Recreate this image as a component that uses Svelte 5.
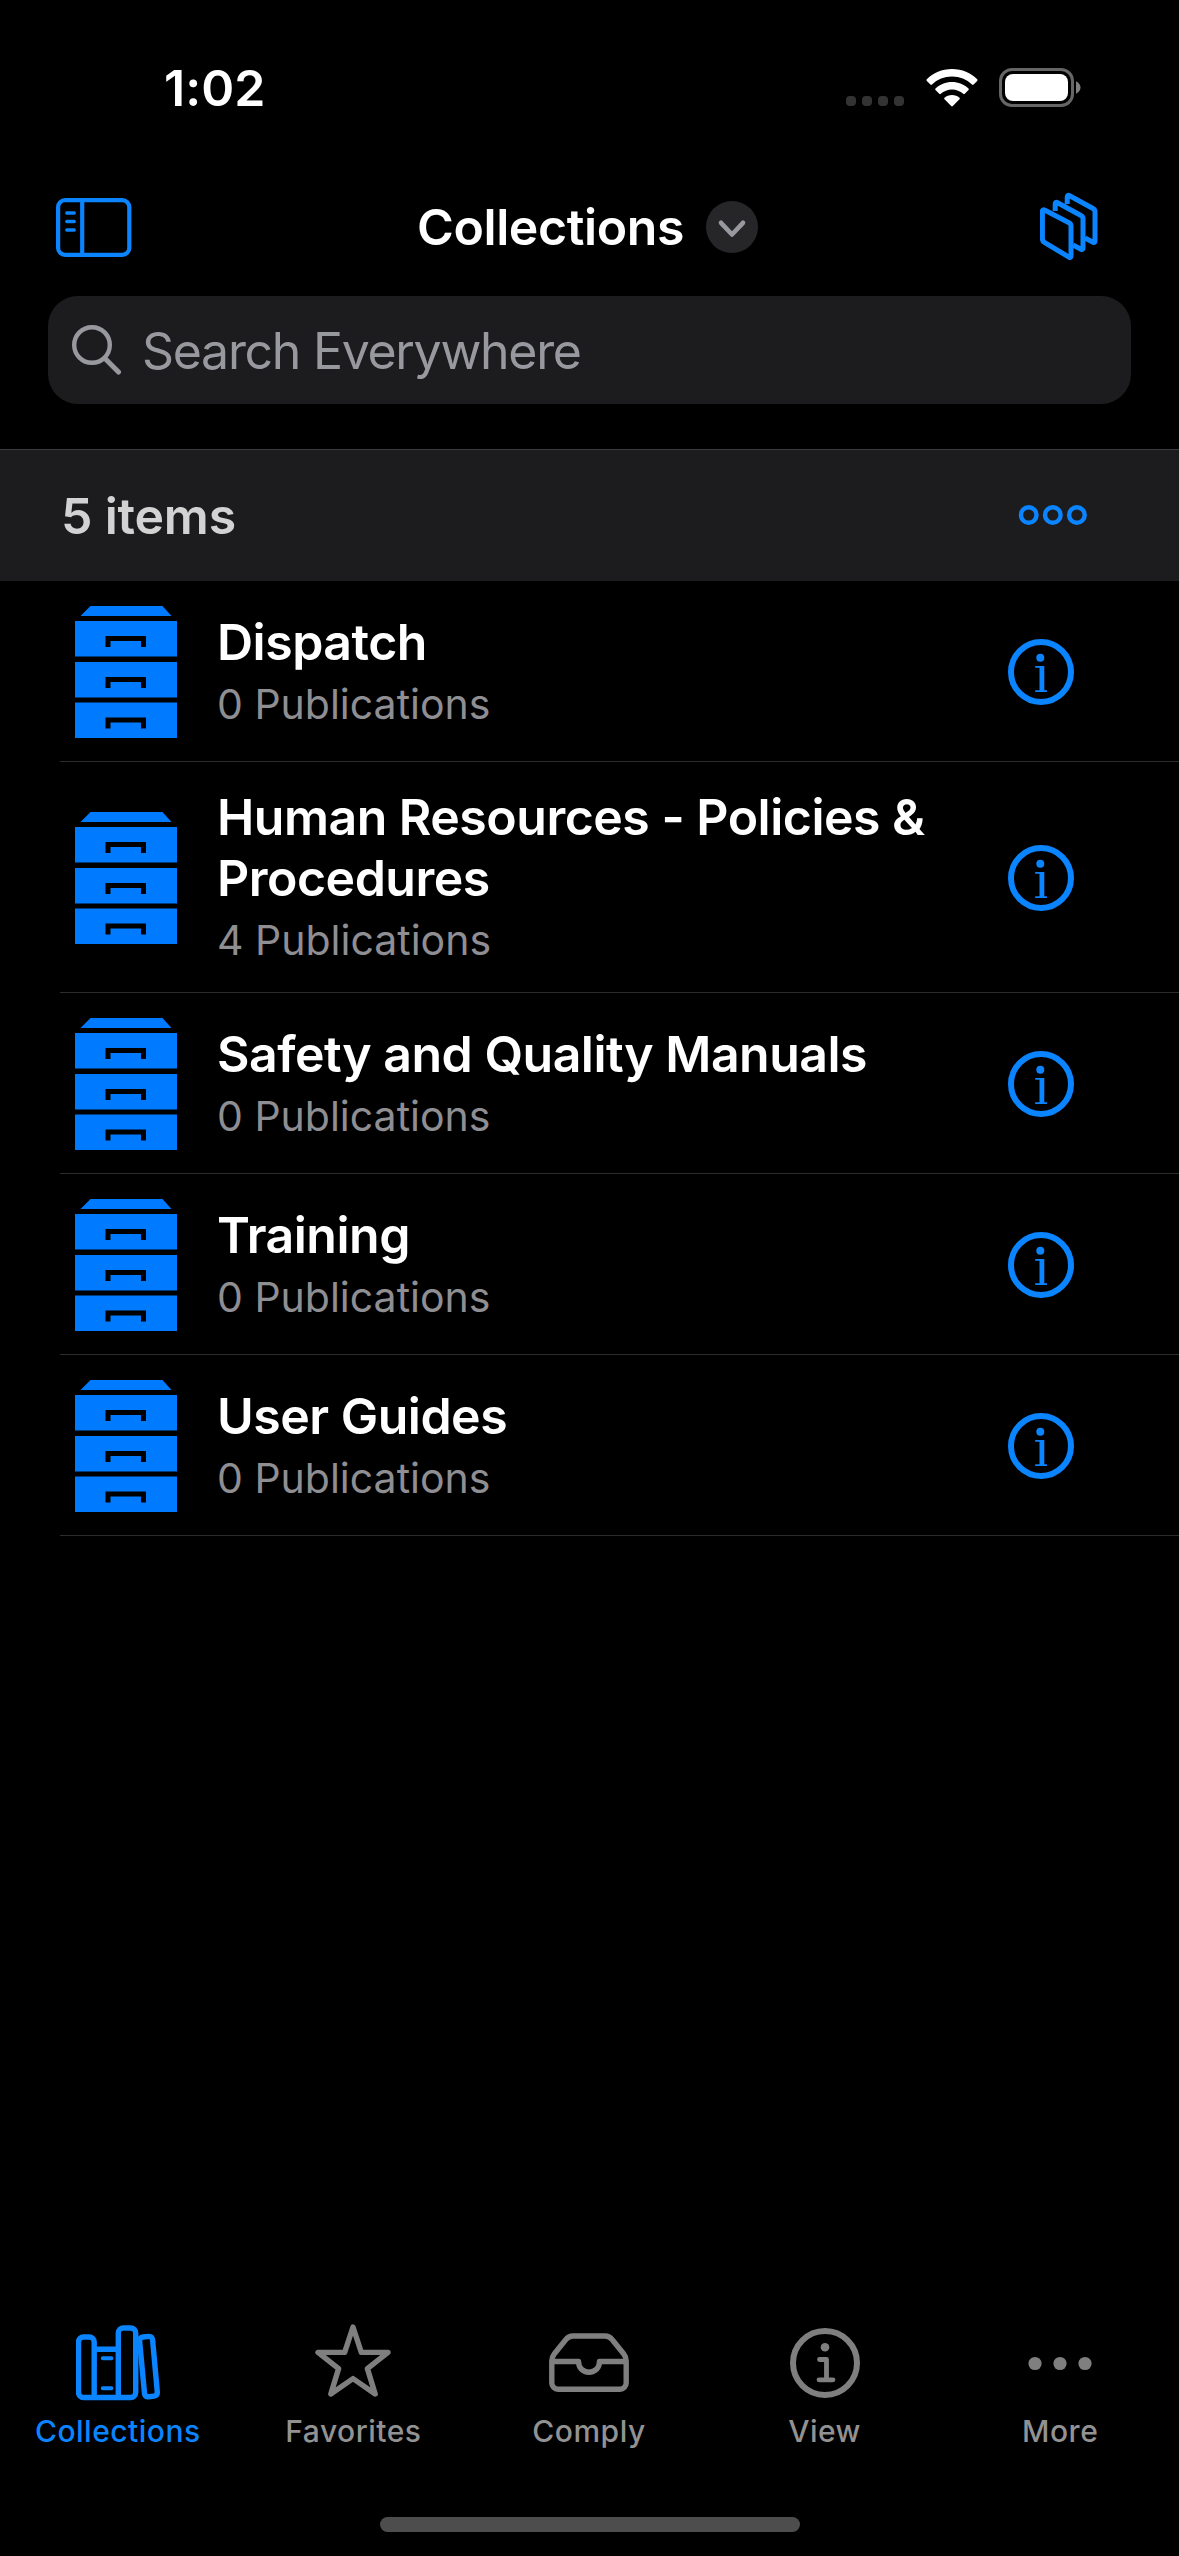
<script>
  /**
   * Collections screen: status bar, navigation, search,
   * list of collections and the bottom tab bar.
   */
  const collections = [
    { name: 'Dispatch', count: 0 },
    { name: 'Human Resources - Policies & Procedures', count: 4 },
    { name: 'Safety and Quality Manuals', count: 0 },
    { name: 'Training', count: 0 },
    { name: 'User Guides', count: 0 },
  ];

  const tabs = [
    { id: 'collections', label: 'Collections' },
    { id: 'favorites', label: 'Favorites' },
    { id: 'comply', label: 'Comply' },
    { id: 'view', label: 'View' },
    { id: 'more', label: 'More' },
  ];

  let activeTab = $state('collections');
</script>

{#snippet tabIcon(id)}
  {#if id === 'collections'}
    <svg width="84" height="78" viewBox="0 0 84 78">
      <g fill="none" stroke="currentColor" stroke-width="5.4" stroke-linejoin="round">
        <path d="M18.2 73.5H7.5a5 5 0 0 1-5-5V18a5 5 0 0 1 5-5h5.7a5 5 0 0 1 5 5v55.5H54.7a5 5 0 0 0 5-5V9a5 5 0 0 0-5-5h-7.4a5 5 0 0 0-5 5v64.5M18.2 25.3h24" />
        <path d="M67 13l6-.6q3.2 0 3.6 3.6l4.7 52q.2 3.6-3.2 4.1l-5.6.7q-3.6.2-4-3.4L63.6 17q-.1-3.6 3.4-4z" />
        <path d="M26.8 34.3h8.6M26.8 64.3h8.6" stroke-width="4" stroke-linecap="round" />
      </g>
    </svg>
  {:else if id === 'favorites'}
    <svg width="78" height="78" viewBox="0 0 78 78">
      <path
        d="M39 3L47.3 28.3L74 28.4L53.4 44.6L61.2 70L39 54.6L16.8 70L24.6 44.6L4 28.4L30.7 28.3Z"
        fill="none"
        stroke="currentColor"
        stroke-width="5.4"
        stroke-linejoin="round"
      />
    </svg>
  {:else if id === 'comply'}
    <svg width="80" height="78" viewBox="0 0 80 78">
      <g fill="none" stroke="currentColor" stroke-width="5.4" stroke-linejoin="round">
        <path d="M2.8 59V37q0-4 2.6-7.2L16.5 16Q19.5 12 24 12H56Q60.5 12 63.5 16L74.6 29.8Q77.2 33 77.2 37V59a6.2 6.2 0 0 1-6.2 6.2H9A6.2 6.2 0 0 1 2.8 59z" />
        <path d="M3 37.5H29.5C29.5 44 34 48.2 40 48.2S50.5 44 50.5 37.5H77" />
      </g>
    </svg>
  {:else if id === 'view'}
    <svg width="78" height="78" viewBox="0 0 78 78">
      <circle cx="39" cy="39" r="32" fill="none" stroke="currentColor" stroke-width="6" />
      <circle cx="39" cy="23.2" r="4.3" fill="currentColor" />
      <path d="M33.5 35.5H40.5V55.8M33 55.8H47" fill="none" stroke="currentColor" stroke-width="4.8" stroke-linecap="round" stroke-linejoin="round" />
    </svg>
  {:else}
    <svg width="78" height="78" viewBox="0 0 78 78" fill="currentColor">
      <circle cx="14" cy="39.5" r="6.6" />
      <circle cx="39" cy="39.5" r="6.6" />
      <circle cx="64" cy="39.5" r="6.6" />
    </svg>
  {/if}
{/snippet}

<div class="screen">
  <div class="status-bar">
    <span class="time">1:02</span>
    <div class="status-icons">
      <div class="signal"><i></i><i></i><i></i><i></i></div>
      <svg class="wifi" width="52" height="38" viewBox="0 0 52 38" fill="#fff">
        <path d="M26 0C36 0 45 4 51.2 10.3q.8.8 0 1.6L47.6 15.6q-.8.7-1.6 0C40.7 10.5 33.7 7.6 26 7.6S11.3 10.5 6 15.6q-.8.7-1.6 0L.8 11.9q-.8-.8 0-1.6C7 4 16 0 26 0z" />
        <path d="M26 13c6.4 0 12.2 2.4 16.5 6.5q.8.8 0 1.6L38.8 24.8q-.8.7-1.6 0C34.2 22.1 30.3 20.5 26 20.5S17.8 22.1 14.8 24.8q-.8.7-1.6 0L9.5 21.1q-.8-.8 0-1.6C13.8 15.4 19.6 13 26 13z" />
        <path d="M26 26c2.9 0 5.5 1 7.5 2.7q.8.8 0 1.6L26.8 37.1q-.8.7-1.6 0L18.5 30.3q-.8-.8 0-1.6C20.5 27 23.1 26 26 26z" />
      </svg>
      <svg width="82" height="39" viewBox="0 0 82 39">
        <rect x="1.5" y="1.5" width="72" height="36" rx="11.5" fill="none" stroke="#666" stroke-width="3" />
        <rect x="6" y="6" width="63" height="27" rx="8" fill="#fff" />
        <path d="M77 13.2c6 3.2 6 9.4 0 12.6z" fill="#808080" />
      </svg>
    </div>
  </div>

  <nav class="nav-bar">
    <button class="plain" aria-label="Toggle sidebar">
      <svg width="76" height="59" viewBox="0 0 76 59" fill="none" stroke="currentColor" stroke-width="4.2">
        <rect x="2.1" y="2.1" width="71.2" height="54.8" rx="7" />
        <path d="M26.2 2v55" />
        <path d="M10.8 15h7.4M10.8 23.5h7.4M10.8 32h7.4" stroke-width="3.4" stroke-linecap="round" />
      </svg>
    </button>
    <button class="plain title">
      <span>Collections</span>
      <svg width="52" height="52" viewBox="0 0 52 52">
        <circle cx="26" cy="26" r="26" fill="#262628" />
        <path d="M15 21.8L26 33.5L37 21.8" fill="none" stroke="#98989f" stroke-width="4.6" stroke-linecap="round" stroke-linejoin="round" />
      </svg>
    </button>
    <button class="plain stack" aria-label="Stacks">
      <svg width="60" height="69" viewBox="0 0 60 69" fill="none" stroke="currentColor" stroke-width="5" stroke-linejoin="round">
        <path d="M5 18.2L29 30.7q2 1 2 3.2V64q0 2.2-2 1.2L4.4 50.3q-2-1-2-3.2V19.4q0-2.3 2.6-1.2z" />
        <path d="M15.200 19V12q0-2.500 2.400-1.200L41 23.500q2 1 2 3.200V56q0 2.200-2 1.200L33 53" />
        <path d="M27.200 12V5q0-2.500 2.400-1.200L53 16.500q2 1 2 3.200V49q0 2.200-2 1.200L45 46" />
      </svg>
    </button>
  </nav>

  <div class="search">
    <svg width="50" height="50" viewBox="0 0 50 50" fill="none" stroke="currentColor" stroke-width="4.4" stroke-linecap="round">
      <circle cx="20" cy="20" r="17.8" />
      <path d="M33 33.5L46.5 47" stroke-width="5" />
    </svg>
    <span>Search Everywhere</span>
  </div>

  <header class="list-header">
    <span>{collections.length} items</span>
    <button class="plain" aria-label="List options">
      <svg width="70" height="20" viewBox="0 0 70 20" fill="none" stroke="currentColor" stroke-width="4.4">
        <circle cx="10.7" cy="10" r="7.8" />
        <circle cx="34.8" cy="10" r="7.8" />
        <circle cx="58.9" cy="10" r="7.8" />
      </svg>
    </button>
  </header>

  <ul class="list">
    {#each collections as item}
      <li class="row">
        <svg width="102" height="132" viewBox="0 0 102 132" fill="#007aff">
          <path d="M15.5 0H87.5L96.5 10H5.5z" />
          {#each [15, 56, 96.5] as y}
            <rect x="0" {y} width="102" height="35.5" />
            <path d="M33 {y + 26}V{y + 17.5}H68.5V{y + 26}" fill="none" stroke="#000" stroke-width="5" />
          {/each}
        </svg>
        <div class="row-text">
          <div class="row-title">{item.name}</div>
          <div class="row-count">{item.count} Publications</div>
        </div>
        <button class="plain" aria-label="Info">
          <svg width="66" height="66" viewBox="0 0 66 66">
            <circle cx="33" cy="33" r="30" fill="none" stroke="currentColor" stroke-width="6" />
            <circle cx="32.3" cy="18.7" r="4" fill="currentColor" />
            <path d="M27.2 27H36.3V51.2H39V53H27.2V51.2H31.5V28.8H27.2z" fill="currentColor" />
          </svg>
        </button>
      </li>
    {/each}
  </ul>

  <div class="tab-bar">
    {#each tabs as tab}
      <button class="plain tab" class:active={tab.id === activeTab} onclick={() => (activeTab = tab.id)}>
        {@render tabIcon(tab.id)}
        <span>{tab.label}</span>
      </button>
    {/each}
  </div>
  <div class="home-indicator"></div>
</div>

<style>
  :global(body) {
    margin: 0;
    background: #000;
  }

  .screen {
    display: flex;
    flex-direction: column;
    width: 1179px;
    height: 2556px;
    overflow: hidden;
    background: #000;
    color: #fff;
    font-family: Inter, 'Liberation Sans', sans-serif;
  }

  svg {
    display: block;
    flex-shrink: 0;
  }

  .plain {
    padding: 0;
    border: none;
    background: none;
    color: #0a84ff;
    font: inherit;
  }

  /* Status bar */
  .status-bar {
    display: flex;
    justify-content: space-between;
    box-sizing: border-box;
    height: 162px;
    padding: 68px 98px 0 164px;
  }

  .time {
    font-size: 50px;
    font-weight: 600;
    line-height: 40px;
    letter-spacing: 0.1px;
  }

  .status-icons {
    display: flex;
    align-items: flex-start;
  }

  .signal {
    display: flex;
    gap: 6px;
    padding-top: 28px;
    margin-right: 22px;
  }

  .signal i {
    width: 10px;
    height: 10px;
    border-radius: 4px;
    background: #333;
  }

  .wifi {
    margin: 1px 21px 0 0;
  }

  /* Navigation */
  .nav-bar {
    display: grid;
    grid-template-columns: 1fr auto 1fr;
    align-items: center;
    height: 130px;
    padding: 0 79px 0 56px;
  }

  .nav-bar .title {
    display: flex;
    align-items: center;
    gap: 22px;
    margin-left: 19px;
    color: #fff;
    font-size: 50px;
    font-weight: 600;
    letter-spacing: -0.4px;
  }

  .nav-bar .stack {
    justify-self: end;
    padding-bottom: 2px;
  }

  .search {
    display: flex;
    align-items: center;
    gap: 20px;
    height: 108px;
    margin: 4px 48px 45px;
    padding-left: 24px;
    border-radius: 30px;
    background: #1c1c1e;
    color: #98989f;
    font-size: 50px;
    letter-spacing: -1.3px;
  }

  .search span {
    padding-top: 2px;
  }

  .list-header {
    display: flex;
    align-items: center;
    justify-content: space-between;
    box-sizing: border-box;
    height: 132px;
    padding: 0 91px 0 61px;
    border-top: 1px solid #3d3d41;
    background: #1c1c1e;
    color: #d2d2d2;
    font-size: 50px;
    font-weight: 600;
    letter-spacing: -0.2px;
  }

  .list-header .plain {
    padding-bottom: 2px;
  }

  /* Collection rows */
  .list {
    flex: 1;
    margin: 0;
    padding: 0 0 0 60px;
    list-style: none;
  }

  .row {
    display: flex;
    align-items: center;
    box-sizing: border-box;
    min-height: 181px;
    padding: 24px 105px 23px 15px;
    border-bottom: 1px solid #2c2c2e;
  }

  .row-text {
    flex: 1;
    margin: 1px 40px -1px;
  }

  .row-title {
    font-size: 50px;
    font-weight: 600;
    line-height: 61px;
    letter-spacing: -0.5px;
  }

  .row-count {
    padding-top: 2px;
    color: #8e8e93;
    font-size: 41px;
    line-height: 59px;
  }

  /* Tab bar */
  .tab-bar {
    display: grid;
    grid-template-columns: repeat(5, 1fr);
    padding-right: 1px;
  }

  .tab {
    display: flex;
    flex-direction: column;
    align-items: center;
    gap: 11px;
    color: #7f7f7f;
    font-size: 30px;
    font-weight: 500;
    line-height: 36px;
    letter-spacing: 0.5px;
  }

  .tab span {
    color: #929292;
  }

  .tab.active,
  .tab.active span {
    color: #0a84ff;
  }

  .home-indicator {
    width: 420px;
    height: 15px;
    margin: 68px auto 24px;
    border-radius: 8px;
    background: #4d4d4d;
  }
</style>
